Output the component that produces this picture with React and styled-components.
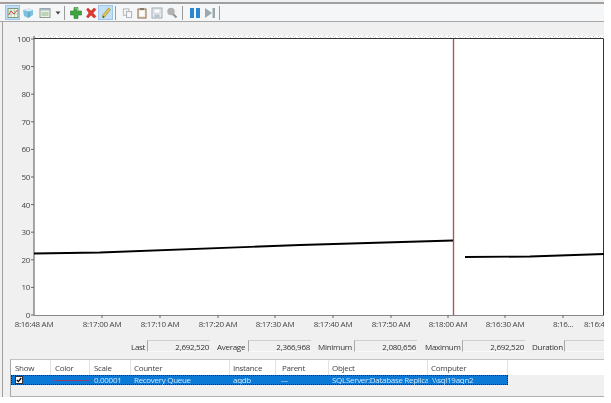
import React from "react";
import styled, { createGlobalStyle } from "styled-components";

const Global = createGlobalStyle`
  html, body { margin: 0; padding: 0; background: #fff; }
  body { font-family: "Open Sans", "Noto Sans", sans-serif; color: #333; }
`;

const Window = styled.div`
  width: 604px;
  height: 397px;
  display: flex;
  flex-direction: column;
  background: #f0f0f0;
  padding-top: 2px;
  box-sizing: border-box;
  filter: blur(0.3px);
`;

const Toolbar = styled.div`
  height: 20px;
  flex: none;
  box-sizing: border-box;
  display: flex;
  align-items: center;
  padding-left: 5px;
  background: #f5f6f7;
  border-top: 2px solid #a0a0a0;
  border-bottom: 1px solid #a8a8a8;
`;

const ToolButton = styled.div`
  width: ${p => p.$w || 15}px;
  height: 15px;
  flex: none;
  display: flex;
  align-items: center;
  justify-content: center;
  box-sizing: border-box;
  background: ${p => (p.$active ? "#c4dff5" : "transparent")};
  border: 1px solid ${p => (p.$active ? "#9cc6ea" : "transparent")};
`;

const ToolSep = styled.div`
  width: 1px;
  height: 14px;
  flex: none;
  margin: 0 ${p => p.$r || 5}px 0 ${p => p.$l || 3}px;
  background: #9a9a9a;
`;

const Body = styled.div`
  flex: 1;
  min-height: 0;
  display: flex;
  flex-direction: column;
  border-left: 1px solid #a0a0a0;
  margin-left: 2px;
`;

const ChartSvg = styled.svg`
  display: block;
  flex: none;
  font-family: "Open Sans", "Noto Sans", sans-serif;
  font-size: 8px;
  letter-spacing: -0.28px;
  fill: #444;
`;

const Stats = styled.div`
  height: 16px;
  flex: none;
  display: flex;
  align-items: center;
  font-size: 8px;
  letter-spacing: -0.28px;
  color: #333;
`;

const StatLabel = styled.span`
  flex: none;
  width: ${p => p.$w}px;
  margin-left: ${p => p.$ml || 0}px;
  white-space: nowrap;
`;

const StatBox = styled.div`
  flex: none;
  width: ${p => p.$w}px;
  height: 12px;
  padding-right: 1px;
  box-sizing: border-box;
  border-left: 1px solid #a9a9a9;
  border-top: 1px solid #cfcfcf;
  border-bottom: 1px solid #f8f8f8;
  display: flex;
  align-items: center;
  justify-content: flex-end;
  white-space: nowrap;
`;

const Legend = styled.div`
  margin: 5px 0 0 7px;
  flex: none;
  height: 38px;
  border-left: 1px solid #a8a8a8;
  border-top: 1px solid #c4c4c4;
  border-bottom: 1px solid #b0b0b0;
  box-sizing: border-box;
  font-size: 8px;
  letter-spacing: -0.3px;
  display: flex;
  flex-direction: column;
`;

const gridCols = "40px 39px 41px 99px 46px 53px 99px 80px";

const LegendHead = styled.div`
  display: grid;
  grid-template-columns: ${gridCols};
  height: 15px;
  flex: none;
  background: #fff;
  color: #444;
`;

const HeadCell = styled.div`
  display: flex;
  align-items: center;
  padding-left: ${p => p.$pl}px;
  border-right: 1px solid #e2e2e2;
  white-space: nowrap;
  overflow: hidden;
`;

const LegendRow = styled.div`
  display: grid;
  grid-template-columns: ${gridCols};
  width: 497px;
  height: 10px;
  flex: none;
  background: #0a7ad6;
  color: #cfe6f8;
  outline: 1px dotted #10263c;
  outline-offset: -1px;
`;

const RowCell = styled.div`
  display: flex;
  align-items: center;
  padding-left: ${p => p.$pl ?? 3}px;
  white-space: nowrap;
  overflow: hidden;
  line-height: 10px;
`;

const Check = styled.div`
  width: 8px;
  height: 8px;
  box-sizing: border-box;
  background: #fff;
  border: 1px solid #333;
  display: flex;
  align-items: center;
  justify-content: center;
`;

const Swatch = styled.div`
  width: 35px;
  height: 1px;
  background: #94406e;
`;

const Ic = ({ w = 12, h = 12, children }) => (
  <svg width={w} height={h} viewBox="0 0 12 12">{children}</svg>
);

const yTicks = [100, 90, 80, 70, 60, 50, 40, 30, 20, 10, 0];
const xTicks = [
  [102, "8:17:00 AM"], [160, "8:17:10 AM"], [218, "8:17:20 AM"], [275, "8:17:30 AM"],
  [333, "8:17:40 AM"], [391, "8:17:50 AM"], [448, "8:18:00 AM"], [505, "8:16:30 AM"],
  [563, "8:16..."],
];

const columns = [
  ["Show", 4], ["Color", 4], ["Scale", 4], ["Counter", 3],
  ["Instance", 3], ["Parent", 6], ["Object", 3], ["Computer", 3],
];

// svg sits at x=3, y=22 of the page
const X = v => v - 3;
const Y = v => v - 22;

function Chart() {
  return (
    <ChartSvg width="601" height="316" viewBox="0 0 601 316">
      <defs>
        <pattern id="hatch" width="5" height="3" patternUnits="userSpaceOnUse">
          <rect width="5" height="3" fill="#fff" />
          <path d="M0 3 L3 0" stroke="#aaa" strokeWidth="0.7" />
        </pattern>
      </defs>
      <rect x={X(34)} y={Y(35.5)} width="570" height="3" fill="url(#hatch)" />
      <rect x={X(34)} y={Y(39)} width="569" height="276" fill="#fff" />
      <path d={`M${X(34)} ${Y(38.5)}H${X(603.5)}V${Y(315)}`} fill="none" stroke="#333" strokeWidth="1" />
      <path d={`M${X(34)} ${Y(36)}V${Y(315.5)}`} fill="none" stroke="#555" strokeWidth="1" />
      <path d={`M${X(34)} ${Y(315.5)}H${X(604)}`} fill="none" stroke="#888" strokeWidth="1" />
      {yTicks.map((t, i) => {
        const y = 39 + i * 27.6;
        return (
          <g key={t}>
            <line x1={X(31)} x2={X(34)} y1={Y(y)} y2={Y(y)} stroke="#666" />
            <text x={X(30)} y={Y(y) + 3} textAnchor="end">{t}</text>
          </g>
        );
      })}
      {xTicks.map(([x, label]) => (
        <g key={x}>
          <line x1={X(x)} x2={X(x)} y1={Y(315)} y2={Y(318)} stroke="#666" />
          <text x={X(x)} y={Y(327)} textAnchor="middle">{label}</text>
        </g>
      ))}
      <text x={X(34)} y={Y(327)} textAnchor="middle">8:16:48 AM</text>
      <text x={X(584)} y={Y(327)}>8:16:4</text>
      <line x1={X(453.5)} x2={X(453.5)} y1={Y(39)} y2={Y(315)} stroke="#f2e0e0" strokeWidth="3" />
      <line x1={X(453.5)} x2={X(453.5)} y1={Y(39)} y2={Y(315)} stroke="#a85656" strokeWidth="1" />
      <path d={`M${X(34)} ${Y(253.5)}L${X(100)} ${Y(252.5)}L${X(300)} ${Y(245)}L${X(453)} ${Y(240.5)}`} fill="none" stroke="#000" strokeWidth="1.9" />
      <path d={`M${X(465)} ${Y(257)}L${X(530)} ${Y(256.5)}L${X(604)} ${Y(254)}`} fill="none" stroke="#000" strokeWidth="1.9" />
    </ChartSvg>
  );
}

export default function App() {
  return (
    <>
      <Global />
      <Window>
        <Toolbar>
          <ToolButton $active>
            <Ic>
              <rect x="1" y="1.5" width="10" height="9" fill="#f4f7ea" stroke="#7a9a7a" />
              <path d="M1 4H11M1 7H11M4 2V10M7.5 2V10" stroke="#9ab89a" strokeWidth=".6" />
              <path d="M1.5 8L4 4L7 7L10.5 3" stroke="#d84a4a" fill="none" />
            </Ic>
          </ToolButton>
          <ToolButton>
            <Ic>
              <path d="M1 3L7 1.5L11 3L11 8L6 11L2 9Z" fill="#7cc0e0" />
              <path d="M1 3L7 4.5L11 3L7 1.5Z" fill="#d8eef8" />
              <path d="M7 4.5V10.5" stroke="#4a98c0" />
            </Ic>
          </ToolButton>
          <ToolButton $w={19}>
            <Ic>
              <rect x="1" y="1.5" width="10" height="9" fill="#eef2e6" stroke="#8d9a90" />
              <rect x="1" y="1.5" width="10" height="2" fill="#a4bac8" />
              <path d="M2.5 6H9.5M2.5 8H9.5" stroke="#88b488" />
            </Ic>
          </ToolButton>
          <ToolButton $w={8}>
            <svg width="6" height="4" viewBox="0 0 6 4"><path d="M0.5 0.5H5.5L3 3.5Z" fill="#444" /></svg>
          </ToolButton>
          <ToolSep $l={2} $r={3} />
          <ToolButton>
            <Ic>
              <path d="M4 .5H8V4H11.5V8H8V11.5H4V8H.5V4H4Z" fill="#3fa63f" stroke="#2c7d2c" strokeWidth=".6" />
              <path d="M4.6 1.2H7.4V4" stroke="#9be09b" fill="none" strokeWidth=".8" />
            </Ic>
          </ToolButton>
          <ToolButton>
            <Ic>
              <path d="M1.5 2.5L3 1L6 4L9 1L11 2.5L8 6L11 9.5L9 11L6 8L3 11L1.5 9.5L4 6Z" fill="#dc3a30" stroke="#c02a20" strokeWidth=".5" />
            </Ic>
          </ToolButton>
          <ToolButton $active>
            <Ic>
              <path d="M3 11L2.5 8.5L8.5 1L10.5 2.5L4.5 10Z" fill="#e8c24a" stroke="#7f8a3a" strokeWidth=".6" />
              <path d="M2.5 8.5L3 11L4.5 10Z" fill="#444" />
            </Ic>
          </ToolButton>
          <ToolSep $l={2} $r={5} />
          <ToolButton $w={13}>
            <Ic>
              <rect x="1.5" y="1.5" width="6" height="7" fill="#f4f4f4" stroke="#b4b4b4" />
              <rect x="5" y="4.5" width="5.5" height="6.5" fill="#f8f8f8" stroke="#a4aeb6" />
            </Ic>
          </ToolButton>
          <ToolButton $w={15}>
            <Ic>
              <rect x="2" y="2" width="8" height="9" fill="#eee8dc" stroke="#8a6a4a" />
              <rect x="4" y="1" width="4" height="2" fill="#8a7a6a" />
              <rect x="3.5" y="4" width="5" height="5" fill="#fbfbfb" />
            </Ic>
          </ToolButton>
          <ToolButton $w={15}>
            <Ic>
              <rect x="1" y="1" width="10" height="10" fill="#e4eaee" stroke="#a2aeb6" />
              <rect x="3" y="2" width="6" height="4" fill="#fbfbfb" stroke="#bcc4ca" strokeWidth=".5" />
              <rect x="3.5" y="7.5" width="5" height="3" fill="#b8c2c8" />
            </Ic>
          </ToolButton>
          <ToolButton $w={15}>
            <Ic>
              <circle cx="5" cy="4.5" r="3.7" fill="#b2b2b2" />
              <path d="M7 7L10.5 10.5" stroke="#969696" strokeWidth="2.2" />
            </Ic>
          </ToolButton>
          <ToolSep $l={3} $r={4} />
          <ToolButton>
            <Ic>
              <rect x="1" y="1" width="4" height="10" fill="#2a88d0" />
              <rect x="7" y="1" width="4" height="10" fill="#2a88d0" />
            </Ic>
          </ToolButton>
          <ToolButton>
            <Ic>
              <path d="M1 1L8 6L1 11Z" fill="#9aa8b0" />
              <rect x="8.5" y="1" width="2.5" height="10" fill="#9aa8b0" />
            </Ic>
          </ToolButton>
          <ToolSep $l={2} $r={0} />
        </Toolbar>
        <Body>
          <Chart />
          <Stats>
            <StatLabel $ml={128} $w={16}>Last</StatLabel>
            <StatBox $w={63}>2,692,520</StatBox>
            <StatLabel $ml={7} $w={31}>Average</StatLabel>
            <StatBox $w={63}>2,366,968</StatBox>
            <StatLabel $ml={7} $w={36}>Minimum</StatLabel>
            <StatBox $w={63}>2,080,656</StatBox>
            <StatLabel $ml={8} $w={37}>Maximum</StatLabel>
            <StatBox $w={63}>2,692,520</StatBox>
            <StatLabel $ml={7} $w={32}>Duration</StatLabel>
            <StatBox $w={40} />
          </Stats>
          <Legend>
            <LegendHead>
              {columns.map(([c, pl]) => <HeadCell key={c} $pl={pl}>{c}</HeadCell>)}
            </LegendHead>
            <LegendRow>
              <RowCell $pl={4}>
                <Check>
                  <svg width="6" height="6" viewBox="0 0 6 6"><path d="M.8 3L2.4 4.6L5.2 1" fill="none" stroke="#000" strokeWidth="1.3" /></svg>
                </Check>
              </RowCell>
              <RowCell><Swatch /></RowCell>
              <RowCell $pl={4}>0.00001</RowCell>
              <RowCell>Recovery Queue</RowCell>
              <RowCell>aqdb</RowCell>
              <RowCell $pl={5}>---</RowCell>
              <RowCell>SQLServer:Database Replica</RowCell>
              <RowCell $pl={4}>\\sql19aqn2</RowCell>
            </LegendRow>
          </Legend>
        </Body>
      </Window>
    </>
  );
}
